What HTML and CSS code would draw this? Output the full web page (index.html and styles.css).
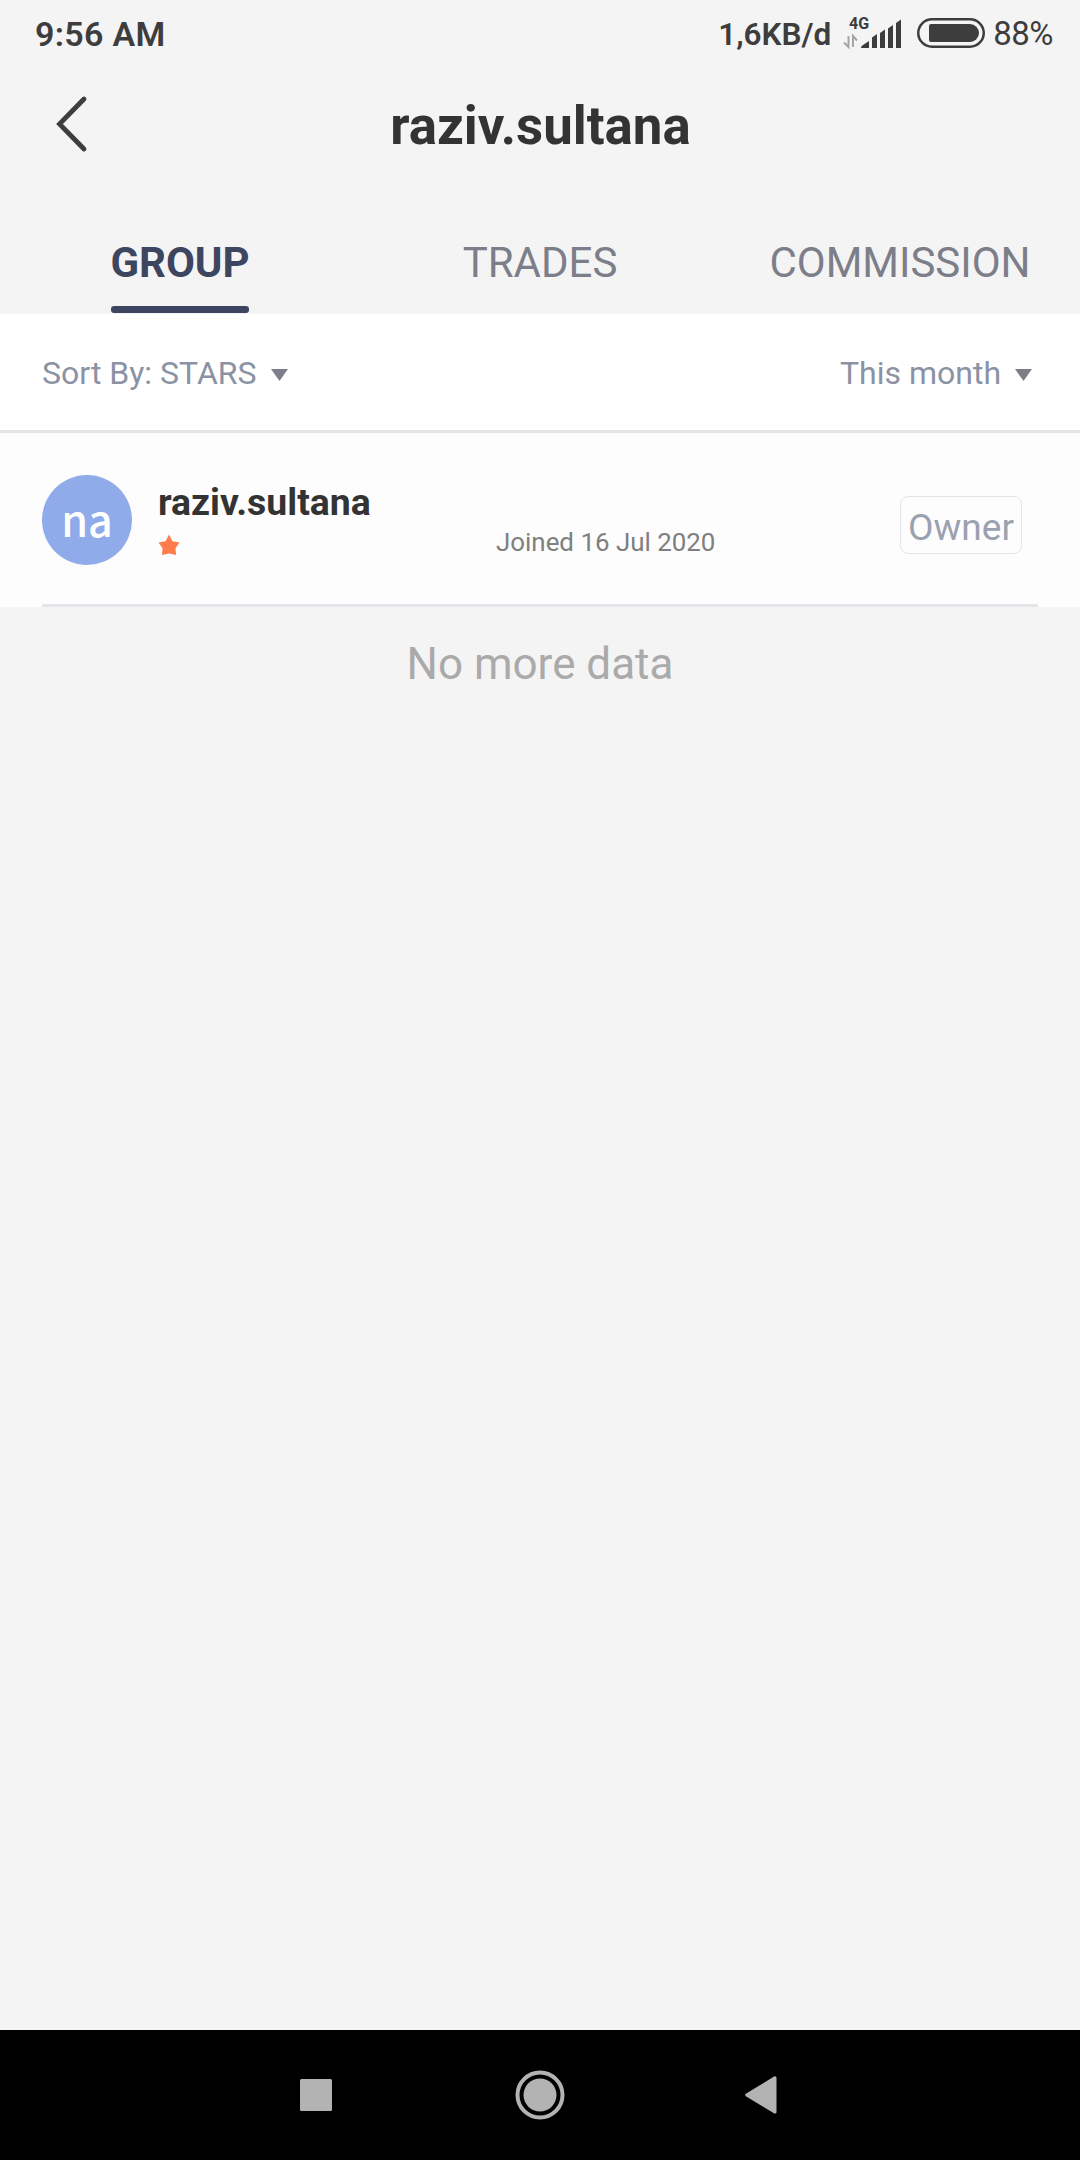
FILE: index.html
```html
<!DOCTYPE html>
<html lang="en">
<head>
  <meta charset="UTF-8" />
  <meta name="viewport" content="width=device-width, initial-scale=1.0" />
  <title>raziv.sultana</title>
  <link rel="stylesheet" href="styles.css">
</head>
<body>
  <div class="screen">
    <div class="status-bar">
      <span class="clock">9:56 AM</span>
      <div class="status-right">
        <span class="speed">1,6KB/d</span>
        <svg class="signal" width="60" height="50" viewBox="0 -8 60 50">
          <text class="signal-type" x="6" y="12.500">4G</text>
          <path class="data-arrows" d="M5.500 20V31L1 26.500M10 31V20L14 24.500" />
          <path class="bars" d="M18 32q0-2 2-3l6-4v7zM29 32V21.500l5-3.500V32zM37 32V17l5-3.500V32zM45 32V12.500l5-3.500V32zM53 32V7l5-3.500V32z" />
        </svg>
        <svg class="battery" width="68" height="30" viewBox="0 0 68 30">
          <rect class="battery-case" x="1.250" y="1.250" width="65.500" height="27.500" rx="13.750" />
          <path class="battery-fill" d="M14 6H53a9 9 0 0 1 0 18H14a2 2 0 0 1-2-2V8a2 2 0 0 1 2-2z" />
        </svg>
        <span class="percent">88%</span>
      </div>
    </div>

    <div class="header">
      <svg class="back" width="32" height="58" viewBox="0 0 32 58">
        <path d="M28 4L3.500 29L28 54" />
      </svg>
      <h1 class="title">raziv.sultana</h1>
    </div>

    <div class="tabs">
      <div class="tab active"><span>GROUP</span></div>
      <div class="tab"><span>TRADES</span></div>
      <div class="tab"><span>COMMISSION</span></div>
    </div>

    <div class="filters">
      <div class="filter">
        <span class="sort">Sort By: STARS</span>
        <svg class="arrow" width="17" height="12" viewBox="0 0 17 12"><path d="M0 0H17L8.500 12z" /></svg>
      </div>
      <div class="filter">
        <span class="period">This month</span>
        <svg class="arrow" width="17" height="12" viewBox="0 0 17 12"><path d="M0 0H17L8.500 12z" /></svg>
      </div>
    </div>

    <div class="list">
      <div class="member">
        <div class="avatar">na</div>
        <div class="info">
          <div class="name">raziv.sultana</div>
          <div class="meta">
            <svg class="star" width="24" height="24" viewBox="0 0 24 24">
              <path d="M12 1.500L15.500 8.300L22.500 9.500L18.500 15.300L19 22L12 20.500L5 22L5.500 15.300L1.500 9.500L8.500 8.300z" />
            </svg>
            <span class="joined">Joined 16 Jul 2020</span>
          </div>
        </div>
        <div class="role">Owner</div>
      </div>
    </div>
    <div class="end">No more data</div>

    <div class="nav-bar">
      <svg width="32" height="32" viewBox="0 0 32 32"><rect width="32" height="32" rx="1.500" /></svg>
      <svg class="home" width="50" height="50" viewBox="0 0 50 50">
        <circle class="ring" cx="25" cy="25" r="22.500" />
        <circle cx="25" cy="25" r="16.500" />
      </svg>
      <svg width="32" height="38" viewBox="0 0 32 38"><path d="M.800 17.800L29 .600Q31.500-.300 31.500 2V36Q31.500 38.300 29 37.200L.800 20.200Q-.500 19 .800 17.800z" /></svg>
    </div>
  </div>
</body>
</html>
```
FILE: styles.css
```css
* { box-sizing: border-box; }
body {
  margin: 0;
  background: #f4f4f4;
  font-family: Roboto, "Liberation Sans", sans-serif;
}
svg {
  display: block;
  flex: none;
}
.screen {
  width: 1080px;
  height: 2160px;
  display: flex;
  flex-direction: column;
  white-space: nowrap;
}

/* status bar */
.status-bar {
  height: 66px;
  padding: 0 27px 0 35px;
  display: flex;
  justify-content: space-between;
  align-items: center;
  color: #3d3d3d;
}
.clock {
  font-size: 34px;
  font-weight: 600;
  letter-spacing: 0.3px;
  padding-top: 1px;
}
.status-right {
  display: flex;
  align-items: center;
}
.speed {
  font-size: 31.5px;
  font-weight: 600;
  padding-top: 2px;
}
.signal {
  margin-left: 12px;
}
.signal-type {
  font-size: 16px;
  font-weight: 700;
  fill: #3d3d3d;
}
.data-arrows {
  fill: none;
  stroke: #a5a5a5;
  stroke-width: 2;
}
.bars {
  fill: #3d3d3d;
}
.battery {
  margin: 0 8px 0 14px;
}
.battery-case {
  fill: none;
  stroke: #3d3d3d;
  stroke-width: 2.5;
}
.battery-fill {
  fill: #3d3d3d;
}
.percent {
  font-size: 33px;
  letter-spacing: -0.5px;
}

/* header */
.header {
  height: 150px;
  padding: 29px 55px 0 56px;
  display: grid;
  grid-template-columns: 80px 1fr 80px;
  align-items: start;
}
.back path {
  fill: none;
  stroke: #3d3d3d;
  stroke-width: 4.8;
  stroke-linecap: round;
}
.title {
  margin: 0;
  font-size: 52.8px;
  line-height: 62px;
  font-weight: 700;
  text-align: center;
  color: #333;
}

/* tabs */
.tabs {
  height: 98px;
  display: grid;
  grid-template-columns: repeat(3, 1fr);
}
.tab {
  display: flex;
  justify-content: center;
  font-size: 42px;
  line-height: 93px;
  color: #7c7e89;
}
.tab span {
  height: 97px;
}
.tab.active {
  font-weight: 700;
  color: #3d4560;
}
.tab.active span {
  display: flex;
  flex-direction: column;
}
.tab.active span::after {
  content: "";
  height: 7px;
  margin: -3px 1px 0;
  border-radius: 3px;
  background: #3d4560;
}

/* filters */
.filters {
  height: 119px;
  padding: 2px 48px 0 42px;
  display: flex;
  justify-content: space-between;
  align-items: center;
  background: #fff;
  border-bottom: 3px solid #e5e6ea;
}
.filter {
  display: flex;
  align-items: center;
  font-size: 32px;
  color: #8a92a3;
}
.arrow {
  margin: 3px 0 0 14px;
  fill: #7c7e89;
}

/* member list */
.list {
  padding: 0 42px;
  background: #fdfdfd;
}
.member {
  height: 174px;
  padding: 42px 16px 0 0;
  display: flex;
  align-items: flex-start;
  border-bottom: 3px solid #e5e6ea;
}
.avatar {
  width: 90px;
  height: 90px;
  border-radius: 50%;
  background: #8fabe9;
  color: #fff;
  font-family: "Noto Sans CJK SC", sans-serif;
  font-size: 43px;
  font-weight: 500;
  line-height: 86px;
  text-align: center;
}
.info {
  flex: 1;
  margin-left: 26px;
}
.name {
  padding-top: 6px;
  font-size: 37.4px;
  line-height: 43px;
  font-weight: 700;
  color: #333;
}
.meta {
  height: 36px;
  display: flex;
  align-items: center;
}
.star {
  margin: 6px 0 0 -1px;
  fill: #ff7d4d;
}
.joined {
  margin-left: 315px;
  font-size: 25.9px;
  color: #7f7f7f;
}
.role {
  width: 122px;
  height: 58px;
  margin-top: 21px;
  border: 1px solid #e2e5ea;
  border-radius: 8px;
  font-size: 37px;
  line-height: 61px;
  text-align: center;
  color: #9aa1b0;
}
.end {
  flex: 1;
  padding-top: 27px;
  font-size: 44px;
  line-height: 60px;
  text-align: center;
  color: #aaa;
}

/* system navigation */
.nav-bar {
  height: 130px;
  padding: 0 303px 1px 300px;
  display: flex;
  justify-content: space-between;
  align-items: center;
  background: #000;
  fill: #b3b3b3;
}
.home {
  margin-left: 3px;
}
.ring {
  fill: none;
  stroke: #b3b3b3;
  stroke-width: 4;
}
```
